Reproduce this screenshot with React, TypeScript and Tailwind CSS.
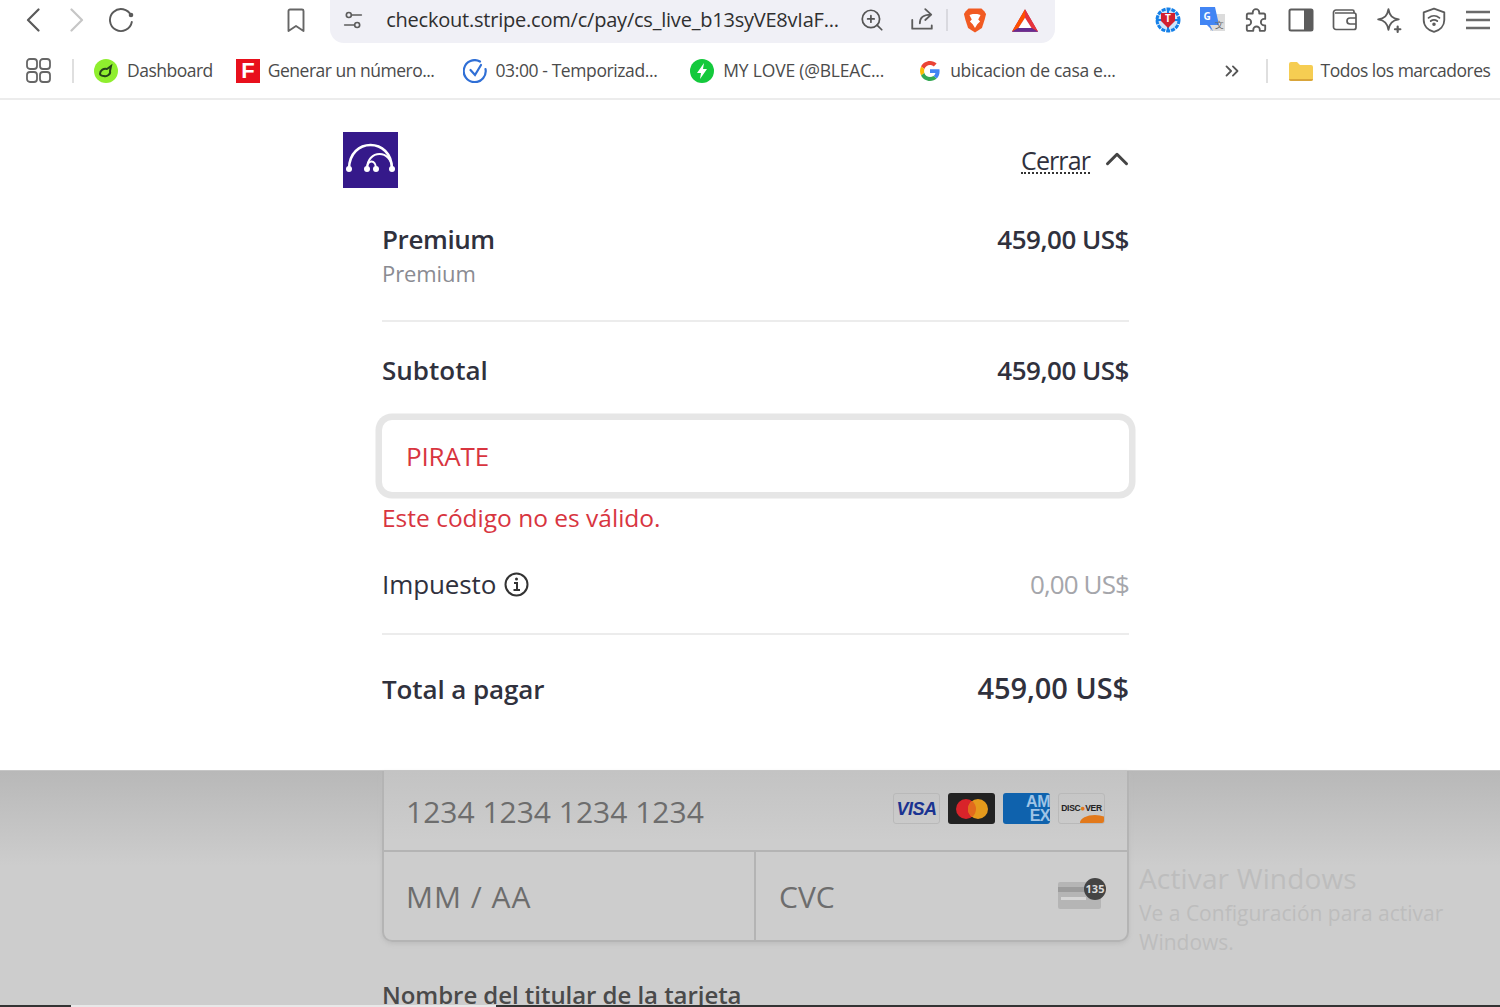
import type { ReactNode } from "react";
import { ChevronUp, ChevronsRight, ZoomIn } from "lucide-react";

const FONT = "font-['Open_Sans','Noto_Sans',sans-serif]";

function Slot({ children }: { children: ReactNode }) {
  return <div className="flex h-[40px] w-[44.3px] shrink-0 items-center justify-center">{children}</div>;
}

function Mark({ className, icon, label }: { className: string; icon: ReactNode; label: string }) {
  return (
    <div className={`flex shrink-0 items-center text-[17.5px] text-[#4b4b4b] ${className}`}>
      {icon}
      <span className="whitespace-nowrap">{label}</span>
    </div>
  );
}

function GrayIcon({ children, w = 26, h = 26, vb = "0 0 24 24" }: { children: ReactNode; w?: number; h?: number; vb?: string }) {
  return (
    <svg width={w} height={h} viewBox={vb} fill="none" stroke="#5c5c5c" strokeWidth="1.7" strokeLinecap="round" strokeLinejoin="round">
      {children}
    </svg>
  );
}

function BrowserBar() {
  return (
    <div className="h-[100px] border-b-2 border-[#ececec] bg-white">
      <div className="flex h-[43px] items-start pl-[11px]">
        <Slot>
          <svg width="14" height="24" viewBox="0 0 14 24" fill="none" stroke="#5a5a5a" strokeWidth="2.200" strokeLinecap="round" strokeLinejoin="round">
            <path d="M12.500 1.500L2 12l10.500 10.500" />
          </svg>
        </Slot>
        <Slot>
          <svg width="14" height="24" viewBox="0 0 14 24" fill="none" stroke="#c6c6c6" strokeWidth="2.200" strokeLinecap="round" strokeLinejoin="round">
            <path d="M1.500 1.500L12 12 1.500 22.500" />
          </svg>
        </Slot>
        <Slot>
          <svg width="28" height="26" viewBox="0 0 28 26" fill="none" stroke="#5a5a5a" strokeWidth="1.900" strokeLinecap="round">
            <path d="M23 8.500A11 11 0 1 0 23.800 15" />
            <circle cx="23" cy="8" r="2.300" fill="#5a5a5a" stroke="none" />
          </svg>
        </Slot>
        <div className="ml-[130px]">
          <Slot>
            <svg width="18" height="25" viewBox="0 0 18 25" fill="none" stroke="#666" strokeWidth="1.900" strokeLinejoin="round">
              <path d="M1.500 3a1.500 1.500 0 0 1 1.500-1.500h12A1.500 1.500 0 0 1 16.500 3v20L9 18l-7.500 5z" />
            </svg>
          </Slot>
        </div>
        <div className="ml-[12px] flex h-[43px] w-[726px] items-center rounded-b-[14px] bg-[#f0f0f6] pb-[3px]">
          <div className="ml-[13px] w-[43px]">
            <GrayIcon w={20} h={20}>
              <circle cx="7" cy="6" r="3" strokeWidth="2" />
              <circle cx="17" cy="18" r="3" strokeWidth="2" />
              <path d="M11 6h11M2 18h11" strokeWidth="2" />
            </GrayIcon>
          </div>
          <span className="w-[452px] whitespace-nowrap text-[20px] tracking-[-0.22px] text-[#2f2f2f]">
            checkout.stripe.com/c/pay/cs_live_b13syVE8vIaF...
          </span>
          <div className="ml-[21px]"><ZoomIn size={26} strokeWidth={1.6} color="#555" /></div>
          <div className="ml-[24px]">
            <GrayIcon w={26} h={26}>
              <path d="M3 12v8h18v-3M10 15c0-5 3-8 10-8M15 2l5.500 5-5.500 5" />
            </GrayIcon>
          </div>
          <div className="ml-[11px] h-[22px] w-[2px] bg-[#d9d9df]" />
          <div className="ml-[15px]">
            <svg width="24" height="29" viewBox="0 0 26 28">
              <path d="M6 1h14l3 3 2 3-1.500 6-3 9-7.500 5-7.500-5-3-9L1 7l2-3z" fill="#f15a22" />
              <path d="M7 8l3.500-1h5L19 8l-2.500 5 2 2-3 3-2.500 4-2.500-4-3-3 2-2z" fill="#fff" />
            </svg>
          </div>
          <div className="ml-[24px]">
            <svg width="28" height="27" viewBox="0 0 30 26">
              <path d="M15 1L1 25h28z" fill="#9e1f63" />
              <path d="M15 1L1 25l7-4 7-11z" fill="#ff5000" />
              <path d="M15 1l14 24-7-4-7-11z" fill="#e8333a" />
              <path d="M1 25h28l-7-4H8z" fill="#662d91" />
              <path d="M15 10l-7 11h14z" fill="#fff" />
            </svg>
          </div>
        </div>
        <div className="ml-[91px] flex">
          <Slot>
            <svg width="26" height="26" viewBox="0 0 26 26">
              <circle cx="13" cy="13" r="11" fill="#cfe6fb" stroke="#1580e8" strokeWidth="3" strokeDasharray="4 1" />
              <path d="M1 13h24M13 1v24" stroke="#1580e8" strokeWidth="2" />
              <path d="M6 6h14v8l-7 7-7-7z" fill="#d2202f" />
              <text x="13" y="15" textAnchor="middle" fontSize="10" fontWeight="700" fill="#fff">T</text>
            </svg>
          </Slot>
          <Slot>
            <svg width="26" height="28" viewBox="0 0 26 28">
              <rect x="11" y="8" width="15" height="17" fill="#dcdcdc" />
              <path d="M1 1h15l4 18h-9l3 6-6-6H1z" fill="#4285f4" />
              <text x="8" y="14" textAnchor="middle" fontSize="10" fontWeight="700" fill="#fff">G</text>
              <text x="20" y="22" textAnchor="middle" fontSize="9" fill="#666">文</text>
            </svg>
          </Slot>
          <Slot>
            <GrayIcon w={26} h={26}>
              <path d="M9 5a3 3 0 0 1 6 0v1h4a1.500 1.500 0 0 1 1.500 1.500V11h-1a3 3 0 0 0 0 6h1v3.500A1.500 1.500 0 0 1 19 22h-3.500v-1a3 3 0 0 0-6 0v1H5a1.500 1.500 0 0 1-1.500-1.500V17h1a3 3 0 0 0 0-6h-1V7.500A1.500 1.500 0 0 1 5 6h4z" />
            </GrayIcon>
          </Slot>
          <Slot>
            <svg width="26" height="24" viewBox="0 0 26 24">
              <rect x="1.500" y="1.500" width="23" height="21" rx="1.500" fill="#fff" stroke="#5c5c5c" strokeWidth="2" />
              <rect x="16" y="1.500" width="8.500" height="21" fill="#5c5c5c" />
            </svg>
          </Slot>
          <Slot>
            <svg width="26" height="24" viewBox="0 0 26 24" fill="none" stroke="#5c5c5c" strokeWidth="1.700">
              <path d="M22 5V3.500A1.500 1.500 0 0 0 20.500 2H4a2.500 2.500 0 0 0-2.500 2.500V19A2.500 2.500 0 0 0 4 21.500h18a2 2 0 0 0 2-2V7a2 2 0 0 0-2-2H3" />
              <path d="M24 10h-6a3 3 0 0 0 0 6h6" />
            </svg>
          </Slot>
          <Slot>
            <GrayIcon w={26} h={26}>
              <path d="M11.500 2c1 6 3.500 8.500 9.500 9.500-6 1-8.500 3.500-9.500 9.500-1-6-3.500-8.500-9.500-9.500 6-1 8.500-3.500 9.500-9.500z" />
              <path d="M20 18v5M17.500 20.500h5" strokeWidth="2" />
            </GrayIcon>
          </Slot>
          <Slot>
            <GrayIcon w={26} h={28}>
              <path d="M12 1.500l9.500 3.500v7c0 5.500-4 9.500-9.500 11-5.500-1.500-9.500-5.500-9.500-11V5z" />
              <path d="M7 10c3-2.500 7-2.500 10 0M9 13c2-1.500 4-1.500 6 0" />
              <circle cx="12" cy="16" r="0.800" fill="#5c5c5c" />
            </GrayIcon>
          </Slot>
          <Slot>
            <svg width="24" height="20" viewBox="0 0 24 20">
              <path d="M0 2h24M0 10h24M0 18h24" stroke="#6a6a6a" strokeWidth="2.400" />
            </svg>
          </Slot>
        </div>
      </div>

      <div className={`flex h-[55px] items-center pl-[26px] ${FONT}`}>
        <svg width="25" height="25" viewBox="0 0 25 25" fill="none" stroke="#666" strokeWidth="1.800">
          <rect x="1" y="1" width="10" height="10" rx="3" />
          <rect x="14" y="1" width="10" height="10" rx="3" />
          <rect x="1" y="14" width="10" height="10" rx="3" />
          <rect x="14" y="14" width="10" height="10" rx="3" />
        </svg>
        <div className="ml-[21px] h-[24px] w-[2px] bg-[#dfdfdf]" />
        <Mark
          className="ml-[20px] gap-[9px] tracking-[-0.5px]"
          label="Dashboard"
          icon={
            <svg width="24" height="24" viewBox="0 0 24 24">
              <circle cx="12" cy="12" r="12" fill="#8fee2e" />
              <path d="M6 15c0-4 4-6 7-5l4-3-1 5c1 3-3 6-6 5-2 0-4-1-4-2z" fill="none" stroke="#24421a" strokeWidth="2" />
            </svg>
          }
        />
        <Mark
          className="ml-[23px] gap-[8px] tracking-[-0.5px]"
          label="Generar un número..."
          icon={
            <div className="flex h-[24px] w-[24px] items-center justify-center bg-[#e8101c] font-['Liberation_Sans'] text-[22px] leading-none font-bold text-white">
              F
            </div>
          }
        />
        <Mark
          className="ml-[29px] gap-[8px] tracking-[-0.4px]"
          label="03:00 - Temporizad..."
          icon={
            <svg width="24" height="24" viewBox="0 0 24 24" fill="none" stroke="#2f6fd6" strokeWidth="2.200" strokeLinecap="round">
              <path d="M17 2.500A11 11 0 1 0 22.500 10" />
              <path d="M7.500 11l4.500 5 6-10" />
            </svg>
          }
        />
        <Mark
          className="ml-[33px] gap-[9px] tracking-[-0.2px]"
          label="MY LOVE (@BLEAC..."
          icon={
            <svg width="24" height="24" viewBox="0 0 24 24">
              <circle cx="12" cy="12" r="12" fill="#14c93c" />
              <path d="M14 4l-7 10h4l-1 6 7-10h-4z" fill="#fff" />
            </svg>
          }
        />
        <Mark
          className="ml-[36px] gap-[10px] tracking-[-0.3px]"
          label="ubicacion de casa e..."
          icon={
            <svg width="20" height="20" viewBox="0 0 48 48">
              <path fill="#ea4335" d="M24 9.500c3.500 0 6.700 1.300 9.100 3.400l6.800-6.800C35.900 2.400 30.300 0 24 0 14.600 0 6.500 5.400 2.600 13.200l7.900 6.200C12.400 13.600 17.700 9.500 24 9.500z" />
              <path fill="#4285f4" d="M47 24.500c0-1.600-.2-3.100-.4-4.500H24v9h12.900c-.6 3-2.200 5.500-4.700 7.200l7.700 6C44.400 37.900 47 31.700 47 24.500z" />
              <path fill="#fbbc05" d="M10.500 28.600C10 27.200 9.800 25.600 9.800 24s.3-3.200.7-4.600l-7.900-6.200C.9 16.400 0 20.100 0 24s.9 7.600 2.600 10.800z" />
              <path fill="#34a853" d="M24 48c6.500 0 11.900-2.100 15.900-5.800l-7.700-6c-2.200 1.400-4.900 2.300-8.200 2.300-6.300 0-11.600-4.200-13.500-9.900l-7.900 6.200C6.500 42.600 14.600 48 24 48z" />
            </svg>
          }
        />
        <div className="ml-[105px]"><ChevronsRight size={22} strokeWidth={2} color="#555" /></div>
        <div className="ml-[23px] h-[24px] w-[2px] bg-[#dfdfdf]" />
        <Mark
          className="ml-[21px] gap-[8px] tracking-[-0.5px]"
          label="Todos los marcadores"
          icon={
            <svg width="24" height="20" viewBox="0 0 24 20">
              <path d="M0 3a2 2 0 0 1 2-2h6l3 3h11a2 2 0 0 1 2 2v12a2 2 0 0 1-2 2H2a2 2 0 0 1-2-2z" fill="#f6cd52" />
              <path d="M0 18h24a2 2 0 0 1-2 2H2a2 2 0 0 1-2-2z" fill="#d9a53a" />
            </svg>
          }
        />
      </div>
    </div>
  );
}

function Summary() {
  return (
    <div className="h-[670px] bg-white text-[#30313d]">
      <div className="ml-[343px] flex w-[786px] items-start justify-between pt-[32px]">
        <div className="h-[56px] w-[55px] bg-[#35198a]">
          <svg width="55" height="56" viewBox="0 0 55 56" fill="none" stroke="#fff" strokeWidth="2.500">
            <path d="M6 37C6 5 49 5 49 37" />
            <path d="M24 37C24 17 49 17 49 37" strokeWidth="2" />
            <path d="M24 37C24 27 33 27 33 37" strokeWidth="2" />
            <circle cx="6" cy="37" r="3" fill="#fff" stroke="none" />
            <circle cx="24" cy="37" r="3" fill="#fff" stroke="none" />
            <circle cx="33" cy="37" r="3" fill="#fff" stroke="none" />
            <circle cx="49" cy="37" r="3" fill="#fff" stroke="none" />
          </svg>
        </div>
        <div className="mr-[-7px] flex items-center gap-[8px] pt-[8px]">
          <span className="mt-[4px] border-b-2 border-dotted border-[#333] text-[25px] leading-[24px] tracking-[-0.9px]">Cerrar</span>
          <ChevronUp size={38} strokeWidth={1.900} color="#444" />
        </div>
      </div>

      <div className="ml-[382px] w-[747px]">
        <div className="flex justify-between pt-[32px] text-[26px] leading-[38px] font-semibold tracking-[-0.4px]">
          <span>Premium</span>
          <span className="tracking-[-0.5px]">459,00 US$</span>
        </div>
        <div className="text-[22px] leading-[30px] tracking-[-0.1px] text-[#8a8b92]">Premium</div>
        <div className="mt-[32px] h-[2px] bg-[#ececec]" />

        <div className="flex justify-between pt-[29px] text-[26px] leading-[38px] font-semibold">
          <span>Subtotal</span>
          <span className="tracking-[-0.5px]">459,00 US$</span>
        </div>

        <div className="mt-[31px] flex h-[72px] items-center rounded-[10px] bg-white pl-[24px] text-[26px] tracking-[-0.2px] text-[#d8353f] shadow-[0_0_0_6.500px_#e6e6e6]">
          PIRATE
        </div>
        <div className="pt-[8px] text-[24.500px] leading-[36px] text-[#d8353f]">Este código no es válido.</div>

        <div className="flex items-center justify-between pt-[30px] text-[26px] leading-[36px]">
          <div className="flex items-center gap-[8px] tracking-[-0.1px]">
            <span>Impuesto</span>
            <svg width="25" height="25" viewBox="0 0 25 25" fill="none" stroke="#333" strokeWidth="2">
              <circle cx="12.500" cy="12.500" r="11" />
              <path d="M10 11h3v7M9.500 18h6.500" />
              <circle cx="12.500" cy="7" r="1.500" fill="#333" stroke="none" />
            </svg>
          </div>
          <span className="tracking-[-0.9px] text-[#a5a6ab]">0,00 US$</span>
        </div>
        <div className="mt-[31px] h-[2px] bg-[#ececec]" />

        <div className="flex items-center justify-between pt-[33px] font-semibold">
          <span className="text-[26px] leading-[40px] tracking-[-0.1px]">Total a pagar</span>
          <span className="mb-[2px] text-[29px] leading-[40px] tracking-[-0.1px]">459,00 US$</span>
        </div>
      </div>
    </div>
  );
}

function CardField() {
  return (
    <div className="h-[237px] border-t border-[#c6c6c6] bg-[linear-gradient(to_bottom,#b8b8b8,#cdcdcd_95px)]">
      <div className="ml-[382px] w-[747px]">
        <div className="h-[171px] rounded-b-[10px] border-x-2 border-b-2 border-[#b4b4b4] bg-[linear-gradient(to_bottom,#c3c3c3,#cdcdcd_70px)] text-[30px] text-[#6d6d6d] shadow-[0_2px_4px_#bdbdbd]">
          <div className="flex h-[81px] items-center justify-between border-b-2 border-[#b4b4b4] pr-[22px] pl-[22px]">
            <span className="pt-[2px]">1234 1234 1234 1234</span>
            <div className="flex gap-[8px] pb-[4px] font-['Liberation_Sans']">
              <div className="flex h-[31px] w-[47px] items-center justify-center rounded-[3px] border border-[#b9b9b9] text-[18px] leading-none font-bold tracking-[-0.5px] text-[#1a3391] italic">
                VISA
              </div>
              <div className="flex h-[31px] w-[47px] items-center justify-center rounded-[3px] bg-[#222]">
                <svg width="34" height="22" viewBox="0 0 34 22">
                  <circle cx="11" cy="11" r="10" fill="#d8232a" />
                  <circle cx="23" cy="11" r="10" fill="#e59a1c" />
                  <path d="M17 3a10 10 0 0 1 0 16 10 10 0 0 1 0-16z" fill="#e26a1d" />
                </svg>
              </div>
              <div className="flex h-[31px] w-[47px] flex-col items-end justify-center rounded-[3px] bg-[#0f62ad] pt-[1px] text-[16px] leading-[14px] font-bold tracking-[-0.5px] text-[#9fc4e6]">
                <span>AM</span>
                <span>EX</span>
              </div>
              <div className="relative flex h-[31px] w-[47px] items-center justify-center overflow-hidden rounded-[3px] border border-[#b9b9b9] text-[8.500px] font-bold tracking-[-0.3px] text-[#222]">
                DISC<span className="text-[#e2791b]">●</span>VER
                <div className="absolute right-[-6px] bottom-[-8px] h-[16px] w-[30px] rounded-[50%] bg-[#e2791b]" />
              </div>
            </div>
          </div>
          <div className="flex h-[88px]">
            <div className="flex w-[372px] items-center border-r-2 border-[#b4b4b4] pl-[22px] tracking-[1px]">MM / AA</div>
            <div className="flex flex-1 items-center justify-between pr-[21px] pl-[23px]">
              <span>CVC</span>
              <svg width="48" height="36" viewBox="0 0 48 36">
                <rect x="0" y="4" width="43" height="27" rx="2" fill="#b5b5b5" />
                <rect x="0" y="9" width="43" height="5" fill="#9c9c9c" />
                <rect x="3" y="19" width="25" height="3" fill="#d6d6d6" />
                <circle cx="37" cy="11" r="11" fill="#444" />
                <text x="37" y="15" textAnchor="middle" fontSize="11" fontWeight="700" fill="#ddd">135</text>
              </svg>
            </div>
          </div>
        </div>
        <div className="pt-[37px] text-[24px] leading-[32px] font-semibold tracking-[-0.05px] text-[#4a4a4a]">
          Nombre del titular de la tarjeta
        </div>
      </div>
    </div>
  );
}

export default function App() {
  return (
    <div className={`relative h-[1007px] w-[1500px] overflow-hidden bg-white ${FONT}`}>
      <BrowserBar />
      <Summary />
      <CardField />
      {/* watermark and taskbar edge sit over the page */}
      <div className="absolute top-[859px] left-[1139px] text-[#bdbdbd]">
        <div className="text-[28px] leading-[38px] tracking-[0.15px]">Activar Windows</div>
        <div className="mt-[2px] w-[330px] text-[21px] leading-[29px]">Ve a Configuración para activar Windows.</div>
      </div>
      <div className="absolute top-[1005px] left-0 flex h-[2px] w-full bg-[#e8e8e8]">
        <div className="h-full w-[71px] bg-[#333]" />
        <div className="ml-[425px] h-full flex-1 bg-[#333]" />
      </div>
    </div>
  );
}
